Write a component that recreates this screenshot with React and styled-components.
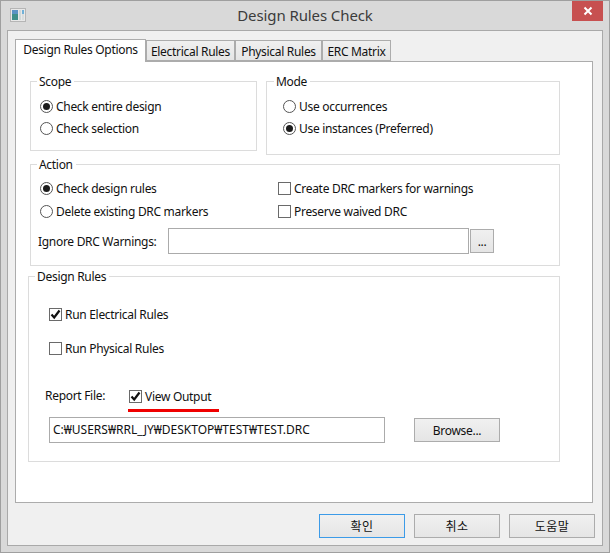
import React from 'react';
import styled, { createGlobalStyle } from 'styled-components';

const GlobalStyle = createGlobalStyle`
  html, body {
    margin: 0;
    padding: 0;
    background: #d9d9d9;
  }
  * {
    box-sizing: border-box;
  }
`;

const Window = styled.div`
  display: flex;
  flex-direction: column;
  width: 610px;
  height: 553px;
  background: #d9d9d9;
  border: 1px solid #9f9f9f;
  font-family: "Noto Sans", "Noto Sans CJK KR", sans-serif;
  font-size: 12px;
  letter-spacing: -0.3px;
  color: #111;
`;

const TitleBar = styled.div`
  display: grid;
  grid-template-columns: 1fr auto 1fr;
  height: 29px;
  padding: 0 5px;
  flex: none;
`;

const AppIcon = styled.svg`
  width: 16px;
  height: 14px;
  margin: 7px 0 0 4px;
`;

const Title = styled.div`
  font-size: 15px;
  letter-spacing: -0.1px;
  line-height: 29px;
  color: #3c3c3c;
`;

const CloseButton = styled.button`
  justify-self: end;
  width: 31px;
  height: 20px;
  margin-right: 1px;
  padding: 0;
  border: 0;
  background: #c75050;
  display: flex;
  align-items: center;
  justify-content: center;
`;

const Frame = styled.div`
  flex: 1;
  display: flex;
  flex-direction: column;
  margin: 0 6px 6px;
  padding: 8px 7px 7px;
  background: #f0f0f0;
  border: 1px solid #a9a9a9;
`;

const TabStrip = styled.div`
  display: flex;
  align-items: flex-end;
  flex: none;
`;

const Tab = styled.div`
  height: ${props => (props.$active ? '23px' : '21px')};
  width: ${props => props.$width}px;
  margin-bottom: ${props => (props.$active ? '-1px' : '0')};
  border: 1px solid #acacac;
  border-bottom: ${props => (props.$active ? '0' : '1px solid #acacac')};
  background: ${props =>
    props.$active ? '#fff' : 'linear-gradient(#f0f0f0, #e5e5e5)'};
  text-align: center;
  line-height: ${props => (props.$active ? '19px' : '21px')};
  white-space: nowrap;
  position: relative;
`;

const Panel = styled.div`
  flex: 1;
  display: flex;
  flex-direction: column;
  margin-right: 2px;
  padding: 19px 32px 0 14px;
  background: #fff;
  border: 1px solid #acacac;
`;

const TopRow = styled.div`
  display: flex;
  align-items: flex-start;
  gap: 9px;
`;

const Group = styled.div`
  position: relative;
  flex: ${props => props.$flex || 'none'};
  width: ${props => (props.$width ? `${props.$width}px` : 'auto')};
  height: ${props => props.$height}px;
  margin: ${props => props.$margin || '0'};
  padding: ${props => props.$padding || '0'};
  border: 1px solid #dcdcdc;
`;

const Legend = styled.span`
  position: absolute;
  top: -8px;
  left: ${props => props.$left}px;
  padding: 0 3px 0 2px;
  background: #fff;
  line-height: 16px;
`;

const Stack = styled.div`
  display: flex;
  flex-direction: column;
  gap: ${props => props.$gap || 0}px;
`;

const OptionRow = styled.label`
  display: flex;
  align-items: center;
  gap: 3px;
  height: 22px;
  white-space: nowrap;
`;

const RadioMark = styled.span`
  width: 13px;
  height: 13px;
  flex: none;
  border-radius: 50%;
  border: 1px solid #555;
  background: #fff;
  display: flex;
  align-items: center;
  justify-content: center;

  &::after {
    content: '';
    width: 7px;
    height: 7px;
    border-radius: 50%;
    background: ${props => (props.$checked ? '#1c1c1c' : 'transparent')};
  }
`;

const BoxMark = styled.span`
  width: 13px;
  height: 13px;
  flex: none;
  border: 1px solid #6a6a6a;
  background: #fff;
  display: flex;
  align-items: center;
  justify-content: center;
`;

const ActionGrid = styled.div`
  display: grid;
  grid-template-columns: 238px 1fr;
`;

const IgnoreRow = styled.div`
  display: flex;
  align-items: center;
  margin: 6px 0 0 -2px;
`;

const FieldLabel = styled.span`
  width: ${props => props.$width}px;
  flex: none;
  margin-top: ${props => (props.$lift ? `-${props.$lift}px` : '0')};
  white-space: nowrap;
`;

const TextInput = styled.div`
  width: ${props => props.$width}px;
  height: 26px;
  flex: none;
  padding-left: 3px;
  border: 1px solid #ababab;
  background: #fff;
  line-height: 24px;
  letter-spacing: 0;
  white-space: nowrap;
  overflow: hidden;
`;

const Button = styled.button`
  width: ${props => props.$width}px;
  height: 24px;
  flex: none;
  margin-left: ${props => props.$gap || 0}px;
  padding: 0;
  border: 1px solid ${props => (props.$focused ? '#3c9be8' : '#acacac')};
  background: linear-gradient(#f0f0f0, #e5e5e5);
  font: inherit;
  letter-spacing: ${props => (props.$korean ? '0.4px' : 'inherit')};
  color: inherit;
`;

const ReportRow = styled.div`
  position: relative;
  display: flex;
  align-items: center;
  height: 22px;
  margin: 26px 0 0 -4px;
`;

const RedUnderline = styled.div`
  position: absolute;
  left: 83px;
  top: 24px;
  width: 91px;
  height: 3px;
  background: #f00000;
`;

const PathRow = styled.div`
  display: flex;
  align-items: center;
  margin-top: 10px;
`;

const ButtonRow = styled.div`
  display: flex;
  justify-content: flex-end;
  gap: 9px;
  margin-top: 11px;
  flex: none;
`;

function Radio({ checked, children }) {
  return (
    <OptionRow>
      <RadioMark $checked={checked} />
      <span>{children}</span>
    </OptionRow>
  );
}

function Checkbox({ checked, children }) {
  return (
    <OptionRow>
      <BoxMark>
        {checked && (
          <svg width="11" height="11" viewBox="0 0 11 11">
            <path d="M1.5 5.5 L4.2 8.5 L9.5 1.5" fill="none" stroke="#111" strokeWidth="2.2" />
          </svg>
        )}
      </BoxMark>
      <span>{children}</span>
    </OptionRow>
  );
}

export default function App() {
  return (
    <Window>
      <GlobalStyle />
      <TitleBar>
        <AppIcon viewBox="0 0 16 14">
          <rect x="0.5" y="0.5" width="15" height="13" fill="#e8e8e8" stroke="#b5b5b5" />
          <rect x="2" y="2" width="6" height="10" fill="#3f8f8a" />
          <rect x="2" y="2" width="6" height="4" fill="#5a93c4" />
          <rect x="9" y="2" width="2" height="10" fill="#cfd8d8" />
          <rect x="12" y="2" width="2" height="4" fill="#6fb0d8" />
          <rect x="12" y="6" width="2" height="6" fill="#d8dcdc" />
        </AppIcon>
        <Title>Design Rules Check</Title>
        <CloseButton aria-label="Close">
          <svg width="10" height="10" viewBox="0 0 10 10">
            <path d="M1.5 1.5 L8.5 8.5 M8.5 1.5 L1.5 8.5" stroke="#fff" strokeWidth="2" />
          </svg>
        </CloseButton>
      </TitleBar>
      <Frame>
        <TabStrip>
          <Tab $active $width={131}>Design Rules Options</Tab>
          <Tab $width={89}>Electrical Rules</Tab>
          <Tab $width={87}>Physical Rules</Tab>
          <Tab $width={69}>ERC Matrix</Tab>
        </TabStrip>
        <Panel>
          <TopRow>
            <Group $width={227} $height={70} $padding="13px 0 0 9px">
              <Legend $left={6}>Scope</Legend>
              <Stack>
                <Radio checked>Check entire design</Radio>
                <Radio>Check selection</Radio>
              </Stack>
            </Group>
            <Group $flex="1" $height={74} $padding="13px 0 0 16px">
              <Legend $left={7}>Mode</Legend>
              <Stack>
                <Radio>Use occurrences</Radio>
                <Radio checked>Use instances (Preferred)</Radio>
              </Stack>
            </Group>
          </TopRow>
          <Group $height={102} $margin="9px 0 0" $padding="12px 0 0 9px">
            <Legend $left={6}>Action</Legend>
            <ActionGrid>
              <Stack $gap={1}>
                <Radio checked>Check design rules</Radio>
                <Radio>Delete existing DRC markers</Radio>
              </Stack>
              <Stack $gap={1}>
                <Checkbox>Create DRC markers for warnings</Checkbox>
                <Checkbox>Preserve waived DRC</Checkbox>
              </Stack>
            </ActionGrid>
            <IgnoreRow>
              <FieldLabel $width={130}>Ignore DRC Warnings:</FieldLabel>
              <TextInput $width={301} />
              <Button $width={24} $gap={1}>...</Button>
            </IgnoreRow>
          </Group>
          <Group $height={186} $margin="10px 0 0 -2px" $padding="26px 0 0 20px">
            <Legend $left={6}>Design Rules</Legend>
            <Stack $gap={12}>
              <Checkbox checked>Run Electrical Rules</Checkbox>
              <Checkbox>Run Physical Rules</Checkbox>
            </Stack>
            <ReportRow>
              <FieldLabel $width={84} $lift={2}>Report File:</FieldLabel>
              <Checkbox checked>View Output</Checkbox>
              <RedUnderline />
            </ReportRow>
            <PathRow>
              <TextInput $width={336}>C:₩USERS₩RRL_JY₩DESKTOP₩TEST₩TEST.DRC</TextInput>
              <Button $width={86} $gap={29}>Browse...</Button>
            </PathRow>
          </Group>
        </Panel>
        <ButtonRow>
          <Button $width={86} $focused $korean>확인</Button>
          <Button $width={86} $korean>취소</Button>
          <Button $width={86} $korean>도움말</Button>
        </ButtonRow>
      </Frame>
    </Window>
  );
}
